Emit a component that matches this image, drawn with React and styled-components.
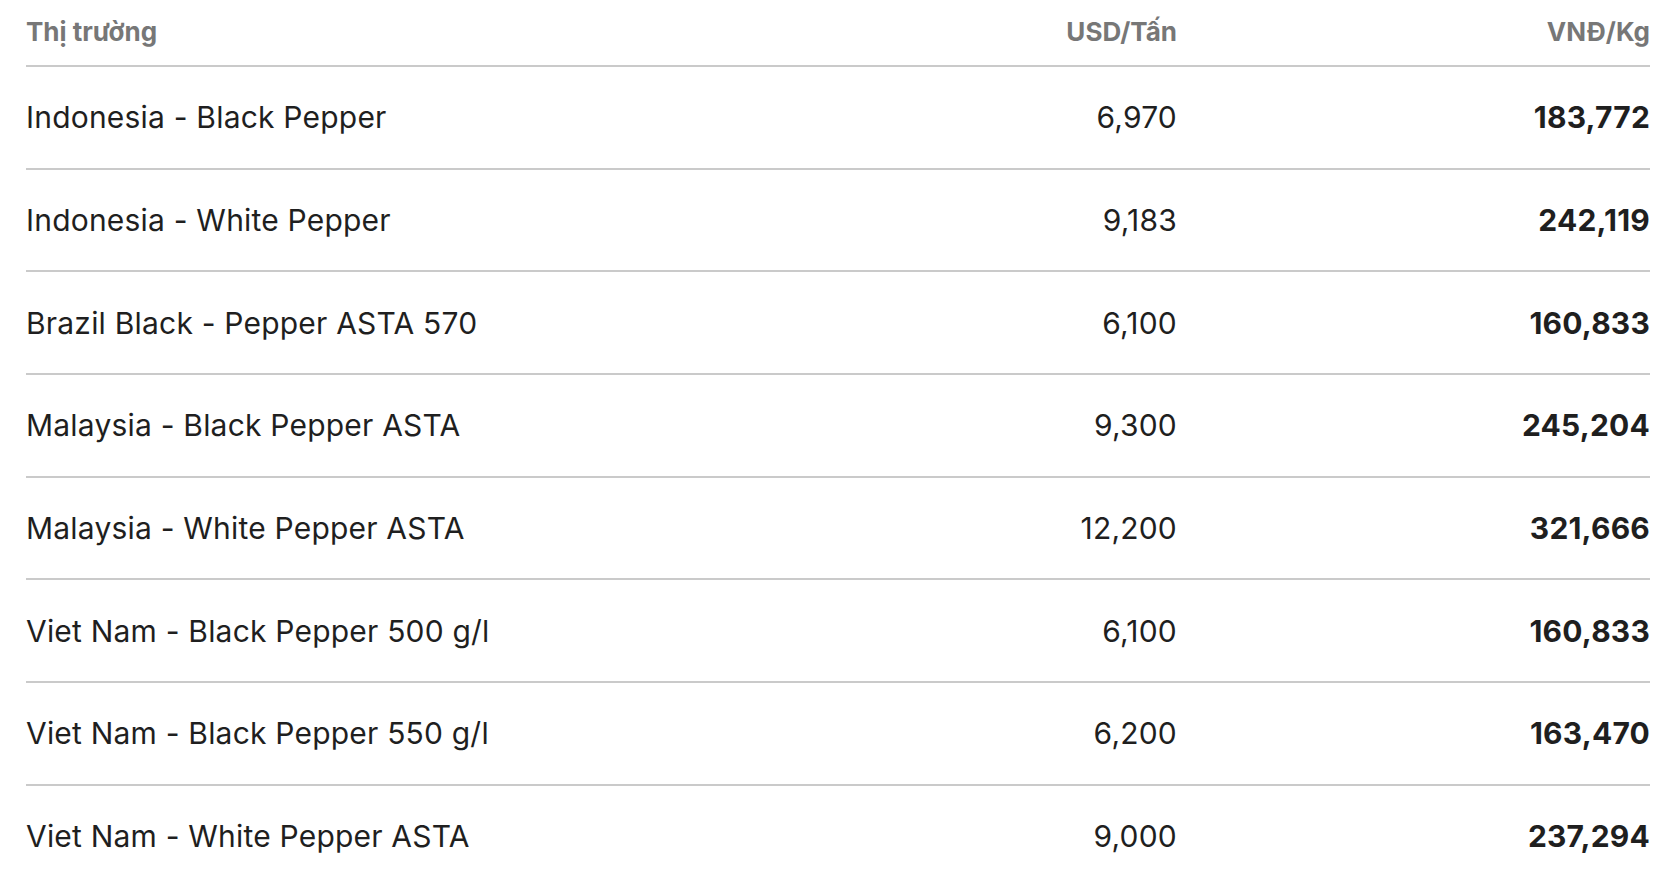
import styled, { createGlobalStyle } from "styled-components";

const GlobalStyle = createGlobalStyle`
  body {
    margin: 0;
    background: #ffffff;
    font-family: Inter, "Noto Sans", sans-serif;
    color: #1f1f1f;
  }
`;

const rows = [
  ["Indonesia - Black Pepper", "6,970", "183,772"],
  ["Indonesia - White Pepper", "9,183", "242,119"],
  ["Brazil Black - Pepper ASTA 570", "6,100", "160,833"],
  ["Malaysia - Black Pepper ASTA", "9,300", "245,204"],
  ["Malaysia - White Pepper ASTA", "12,200", "321,666"],
  ["Viet Nam - Black Pepper 500 g/l", "6,100", "160,833"],
  ["Viet Nam - Black Pepper 550 g/l", "6,200", "163,470"],
  ["Viet Nam - White Pepper ASTA", "9,000", "237,294"],
];

const App = () => {
  return (
    <>
      <GlobalStyle />
      <Wrap>
        <HeadRow>
          <HeadCell>Thị trường</HeadCell>
          <HeadCell $right>USD/Tấn</HeadCell>
          <HeadCell $right>VNĐ/Kg</HeadCell>
        </HeadRow>
        {rows.map((r, i) => (
          <Row key={i}>
            <Cell>{r[0]}</Cell>
            <Cell $right>{r[1]}</Cell>
            <Cell $right $bold>{r[2]}</Cell>
          </Row>
        ))}
      </Wrap>
    </>
  );
};

export default App;

const Wrap = styled.div`
  padding: 0 16px 0 26px;
  height: 878px;
  overflow: hidden;
`;

const HeadRow = styled.div`
  box-sizing: border-box;
  display: grid;
  grid-template-columns: 1fr 240px 473px;
  align-items: center;
  height: 67px;
  border-bottom: 2px solid #cacaca;
`;

const HeadCell = styled.div`
  font-size: 26px;
  font-weight: 700;
  color: #777777;
  text-align: ${(p) => (p.$right ? "right" : "left")};
  padding-bottom: 2px;
`;

const Row = styled.div`
  box-sizing: border-box;
  display: grid;
  grid-template-columns: 1fr 240px 473px;
  align-items: center;
  height: 102.7px;
  border-bottom: 2px solid #cacaca;
`;

const Cell = styled.div`
  font-size: 30px;
  letter-spacing: 0.2px;
  font-weight: ${(p) => (p.$bold ? 700 : 400)};
  color: #1f1f1f;
  text-align: ${(p) => (p.$right ? "right" : "left")};
`;
